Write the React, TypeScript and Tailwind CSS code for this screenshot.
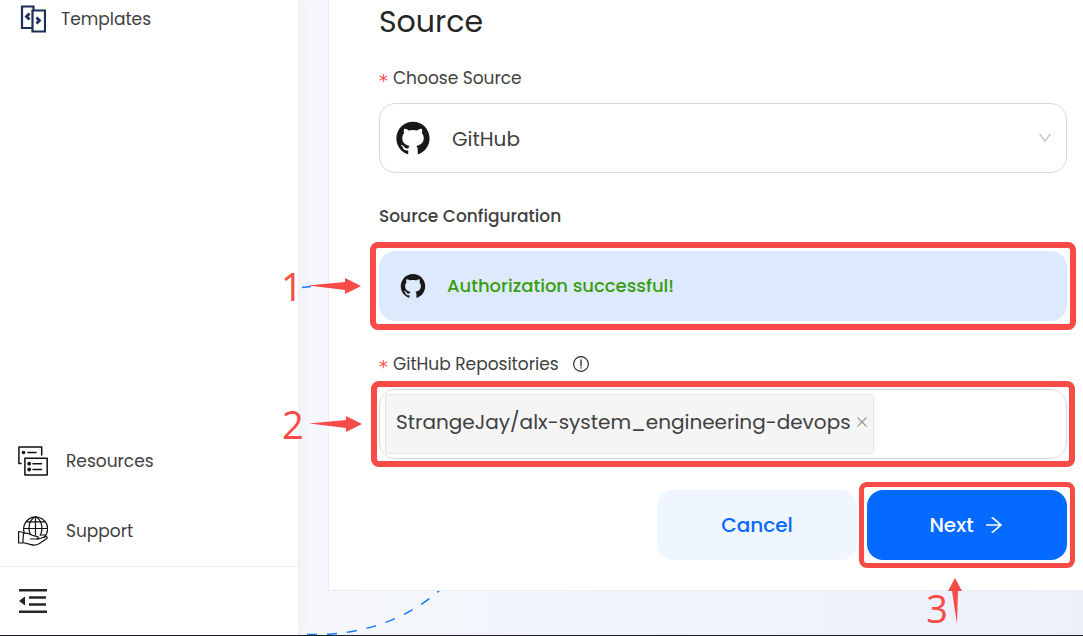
import React, { useState } from "react";
import { AiOutlineGithub, AiOutlineArrowRight, AiOutlineDown, AiOutlineClose } from "react-icons/ai";

function TemplatesIcon() {
  return (
    <svg viewBox="0 0 26 28" className="h-7 w-[26px] shrink-0" fill="none" stroke="#1b2f58" strokeWidth="2.200">
      <path d="M12.500 23H2V1.500h11.500V5M12.500 5.500H25V26.500H12.500z" />
      <path d="M9.500 8.500 6.500 11.500l3 3M16.500 12.500l3 3-3 3" strokeWidth="2.800" />
    </svg>
  );
}

function ResourcesIcon() {
  return (
    <svg viewBox="0 0 30 30" className="size-[30px] shrink-0" fill="none" stroke="#111" strokeWidth="1.500" strokeLinecap="round" strokeLinejoin="round">
      <path d="M3 17.500H.9V.9h22.800V9M6.900 12.200h22.300v16.900H6.900zM10 6.500h8M15 17.700h8.500M15 23.500h8.500" />
      <g fill="#111" stroke="none">
        <circle cx="5.500" cy="6.500" r="1.800" />
        <circle cx="11.200" cy="17.700" r="1.900" />
        <circle cx="11.200" cy="23.500" r="1.900" />
      </g>
    </svg>
  );
}

function SupportIcon() {
  return (
    <svg viewBox="0 0 30 30" className="size-[30px] shrink-0" fill="none" stroke="#111" strokeWidth="1.200" strokeLinecap="round" strokeLinejoin="round">
      <path d="M6.200 16.500A12 12 0 1 1 26 21.500M17.500.7v18M5.600 12.500h23.800M8 5.800h19M22 19h5.300" />
      <path d="M12 17.500C9.500 11 11.500 3.500 17.500.7c6 2.800 8 10.800 5 18.300" />
      <path d="M.6 15.500l4.900 1-.7 10.500H.6zM5.500 17.500c3-.8 5.500-.3 8 1.500 2 1 5 .7 6.500 2 .7 1.200-.3 2-1.800 2h-5.700M19.500 23.200l7.500-2.500c2-.5 3 .7 1.500 2l-7.500 5c-2.500 1.500-5 1.800-8 .9l-8.200-2.100" />
    </svg>
  );
}

function CollapseIcon() {
  return (
    <svg viewBox="0 0 28 24" className="h-6 w-7" fill="none" stroke="#262626" strokeWidth="2.500">
      <path d="M0 1.300h28M10 8.500h17M10 15.500h17M0 22.700h28" />
      <path d="M0 12l6-4.500v9z" fill="#262626" stroke="none" />
    </svg>
  );
}

function InfoIcon() {
  return (
    <svg viewBox="0 0 16 16" className="size-4" fill="none" stroke="#222" strokeWidth="1.100">
      <circle cx="8" cy="8" r="7.400" />
      <path d="M8 3.500v6.700M8 11.200v1.300" strokeWidth="1.300" />
    </svg>
  );
}

function Highlight() {
  return <span aria-hidden="true" className="pointer-events-none absolute -inset-[9px] rounded-lg border-[6px] border-[#f84b48]" />;
}

function Step({ n }: { n: number }) {
  return (
    <div className="pointer-events-none absolute top-1/2 -left-[98px] flex -translate-y-1/2 items-center gap-[5px]">
      <span className="font-['Open_Sans',sans-serif] text-[38px] leading-10 font-normal text-[#f84b48]">{n}</span>
      <svg viewBox="0 0 53 16" className="h-4 w-[53px]" fill="#f84b48">
        <path d="M0 7.500 37 4V0l16 8-16 8v-4z" />
      </svg>
    </div>
  );
}

function Required() {
  return <span className="mr-[5px] inline-block translate-y-[3px] font-['DejaVu_Sans',sans-serif] text-[18px] leading-6 text-[#ff4d4f]">*</span>;
}

export default function App() {
  const [repos, setRepos] = useState(["StrangeJay/alx-system_engineering-devops"]);
  return (
    <div className="flex min-h-screen border-b border-[#1c1d22] bg-white font-['Poppins','Inter',sans-serif] text-[#404040]">
      <aside className="flex w-[298px] shrink-0 flex-col text-[17px] leading-6">
        <nav className="flex flex-1 flex-col justify-between">
          <a href="#templates" className="flex items-center gap-[15px] px-5 pt-[5px]">
            <TemplatesIcon />
            Templates
          </a>
          <div className="flex flex-col gap-10 pb-5">
            <a href="#resources" className="flex items-center gap-[18px] px-[18px]">
              <ResourcesIcon />
              Resources
            </a>
            <a href="#support" className="flex items-center gap-[18px] px-[18px]">
              <SupportIcon />
              Support
            </a>
          </div>
        </nav>
        <div className="flex h-[69px] items-center border-t border-[#ececee] px-[19px]">
          <button type="button" aria-label="Collapse menu">
            <CollapseIcon />
          </button>
        </div>
      </aside>

      <main className="relative min-w-0 flex-1 bg-linear-to-r from-[#f5f7fb] to-[#ebf0fb] pb-11 pl-[30px] shadow-[inset_8px_0_8px_-4px_#eff0f4]">
        <svg viewBox="0 0 160 350" className="absolute bottom-0 left-0 h-[350px] w-40" fill="none" stroke="#1677ff" strokeWidth="1.500">
          <path d="M4 2.500l9-1" />
          <path d="M9 349.500C60 351 105 337 142 305" strokeDasharray="10 10" />
        </svg>
        <form
          className="relative border-b border-l border-[#ebecef] bg-white pt-1 pr-4 pb-[30px] pl-[50px]"
          onSubmit={(e) => e.preventDefault()}
        >
          <h1 className="text-[30px] leading-9 font-normal text-[#262626]">Source</h1>

          <label htmlFor="source" className="mt-[26px] flex text-[17px] leading-6">
            <Required />
            Choose Source
          </label>
          <div className="relative mt-[13px] flex h-[70px] items-center rounded-2xl border border-[#d9d9d9] pl-[14px]">
            <AiOutlineGithub className="size-[38px] text-[#191717]" />
            <select id="source" className="h-full flex-1 appearance-none bg-transparent pt-0.5 pl-5 text-xl outline-none">
              <option>GitHub</option>
            </select>
            <AiOutlineDown className="pointer-events-none absolute right-[13px] size-4 text-[#bfbfbf]" />
          </div>

          <h2 className="mt-[31px] text-[17px] leading-6 font-medium">Source Configuration</h2>
          <div className="relative mt-[23px] flex h-[70px] items-center gap-5 rounded-2xl bg-[#dde9fd] px-5">
            <AiOutlineGithub className="size-7 text-[#191717]" />
            <p className="text-[18px] leading-6 font-medium text-[#389e0d]">Authorization successful!</p>
            <Highlight />
            <Step n={1} />
          </div>

          <div className="mt-[31px] flex items-center gap-[14px] text-[17px] leading-6">
            <label htmlFor="repos" className="flex">
              <Required />
              GitHub Repositories
            </label>
            <InfoIcon />
          </div>
          <div className="relative mt-[13px] flex h-[70px] items-center rounded-2xl border border-[#d9d9d9] px-[5px]">
            {repos.map((repo) => (
              <span key={repo} className="flex h-[60px] items-center gap-1 rounded-sm border border-[#e4e4e4] bg-[#f5f5f5] pr-1 pb-1 pl-[10px] text-xl">
                {repo}
                <button type="button" aria-label="Remove" onClick={() => setRepos(repos.filter((r) => r !== repo))}>
                  <AiOutlineClose className="size-[14px] text-[#8c8c8c]" />
                </button>
              </span>
            ))}
            <input id="repos" className="h-full min-w-0 flex-1 bg-transparent px-2 text-xl outline-none" />
            <Highlight />
            <Step n={2} />
          </div>

          <div className="mt-[31px] flex justify-end gap-[10px] text-xl font-medium">
            <button type="button" className="h-[70px] w-[200px] rounded-2xl bg-[#eff6ff] text-[#056aff]">
              Cancel
            </button>
            <button type="submit" className="relative flex h-[70px] w-[200px] items-center justify-center gap-[9px] rounded-2xl bg-[#056aff] text-white">
              Next
              <AiOutlineArrowRight className="size-[22px]" />
              <span aria-hidden="true" className="pointer-events-none absolute -inset-2 rounded-lg border-[5px] border-[#f84b48]" />
            </button>
          </div>
          <div className="pointer-events-none absolute right-[121px] -bottom-[38px] flex items-end">
            <span className="font-['Open_Sans',sans-serif] text-[38px] leading-10 font-normal text-[#f84b48]">3</span>
            <svg viewBox="0 0 14 46" className="mb-1 h-[46px] w-[14px]" fill="#f84b48">
              <path d="M7 0l7 13h-4L9 46 4 13H0z" />
            </svg>
          </div>
        </form>
      </main>
    </div>
  );
}
